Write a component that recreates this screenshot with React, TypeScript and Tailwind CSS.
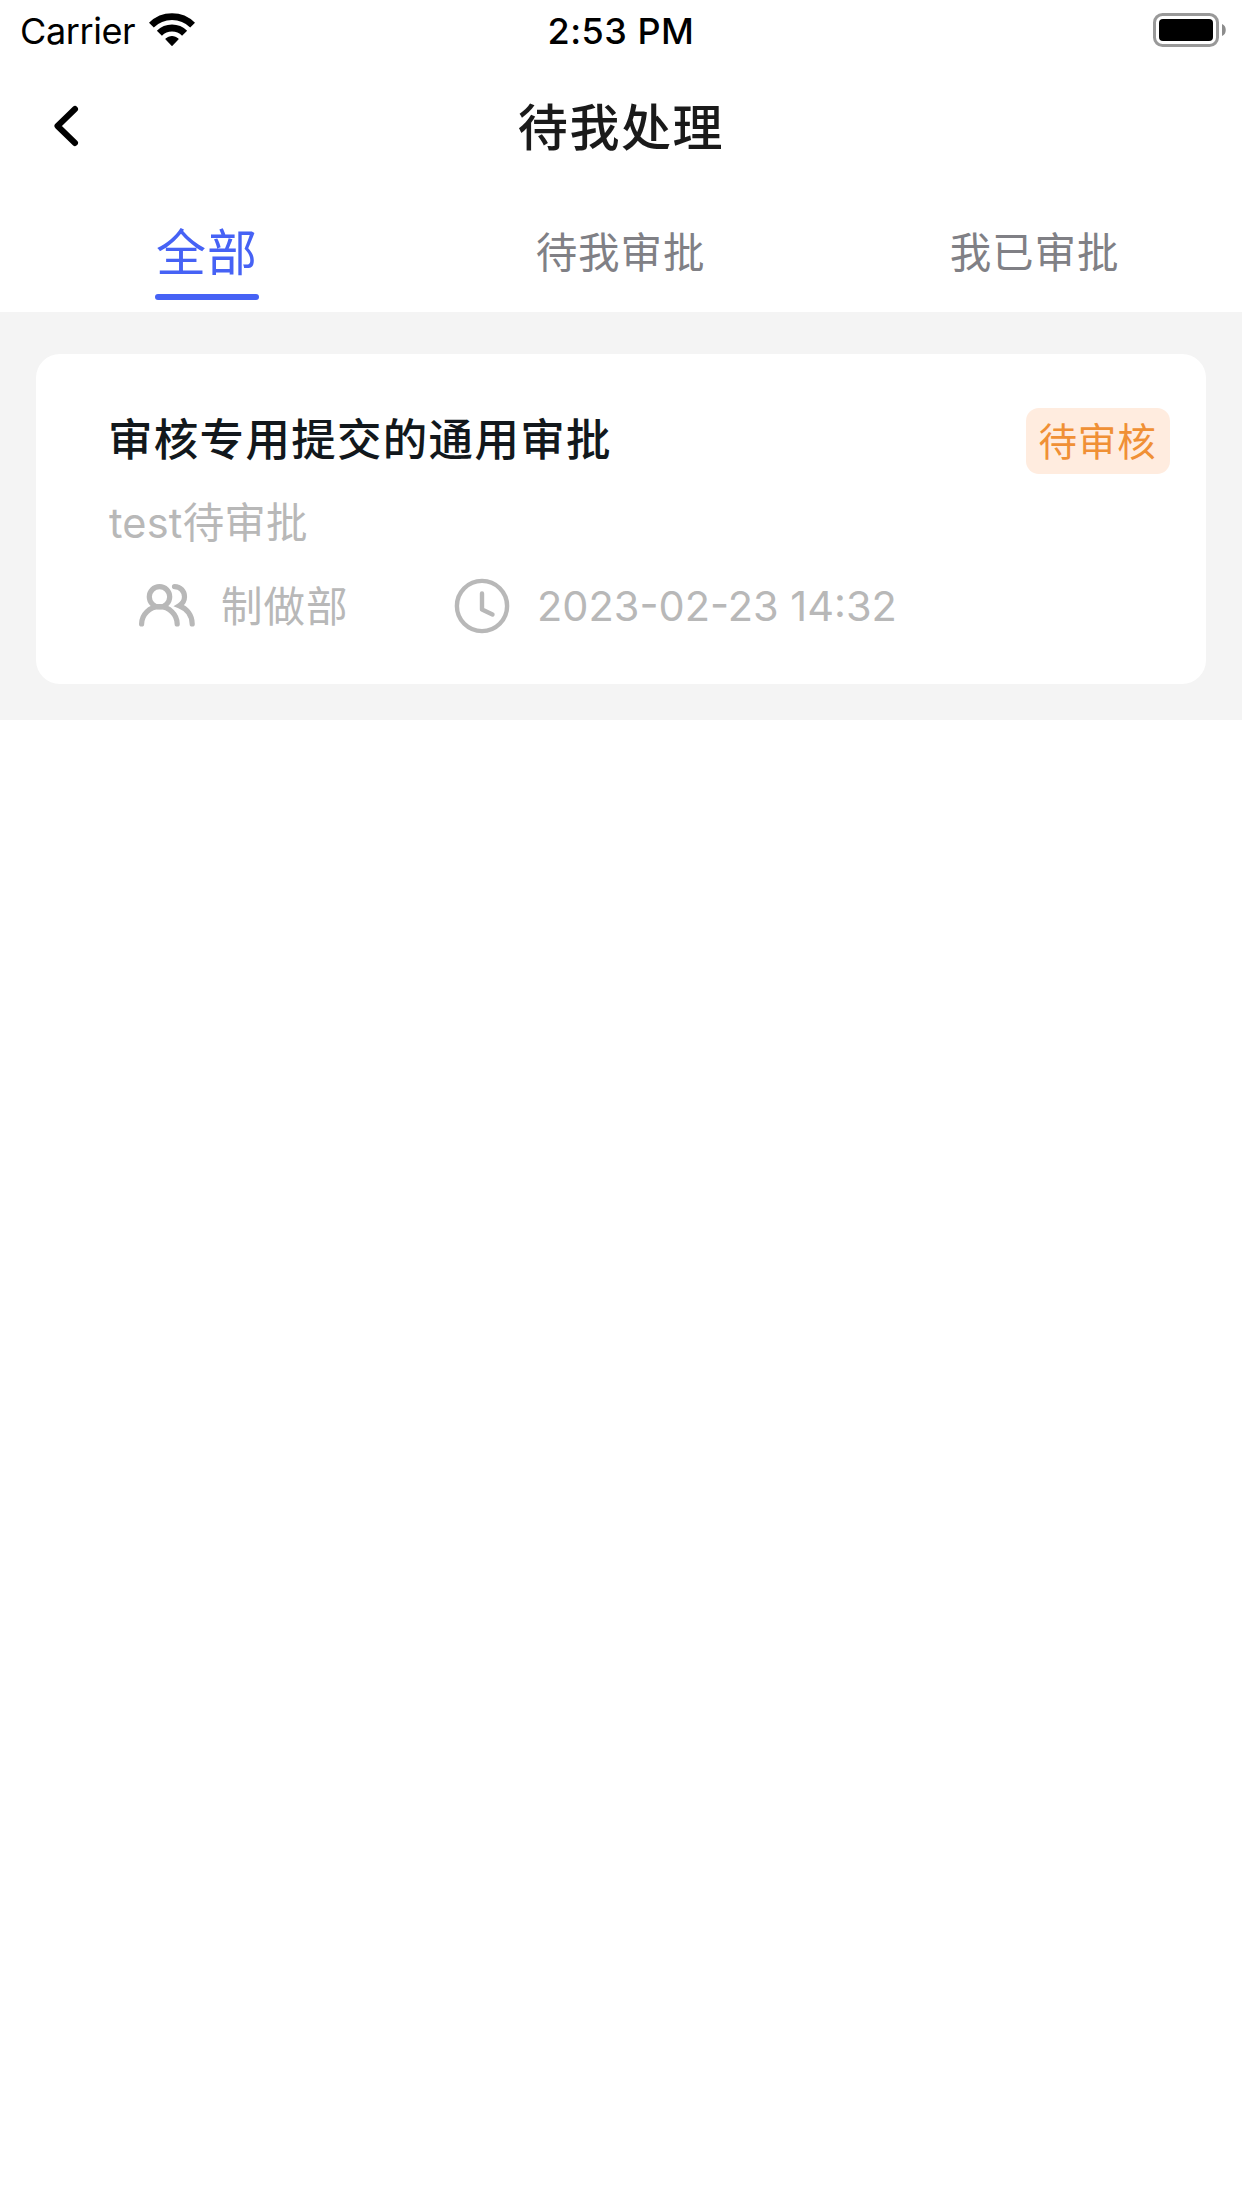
const tabs = ['全部', '待我审批', '我已审批']

interface Approval {
  title: string
  summary: string
  department: string
  time: string
  status: string
}

const approvals: Approval[] = [
  {
    title: '审核专用提交的通用审批',
    summary: 'test待审批',
    department: '制做部',
    time: '2023-02-23 14:32',
    status: '待审核',
  },
]

function WifiIcon() {
  return (
    <svg width="46" height="34" viewBox="0 0 46 34" fill="none" stroke="black">
      <path d="M2.4 12.2a29.2 29.2 0 0 1 41.2 0" strokeWidth="6.8" />
      <path d="M10.4 20.2a17.9 17.9 0 0 1 25.2 0" strokeWidth="7.2" />
      <path d="M23 32.3 17 26a8.6 8.6 0 0 1 12 0Z" fill="black" strokeWidth="1.2" strokeLinejoin="round" />
    </svg>
  )
}

function BatteryIcon() {
  return (
    <svg width="73" height="34" viewBox="0 0 73 34">
      <rect x="1.5" y="1.5" width="63" height="31" rx="8" fill="none" stroke="#999" strokeWidth="3" />
      <rect x="6" y="6" width="54" height="22" rx="4" fill="black" />
      <path d="M69 11c5 1.6 5 10.4 0 12Z" fill="#8c8c8c" />
    </svg>
  )
}

function PeopleIcon() {
  return (
    <svg width="56" height="44" viewBox="0 0 56 44" fill="none" stroke="currentColor" strokeWidth="5.2" strokeLinecap="round">
      <ellipse cx="20.5" cy="12.8" rx="10.2" ry="10.2" />
      <path d="M2.6 40a17.8 17.3 0 0 1 35.6 0" />
      <path d="M35.5 2.6c6 0 10 4.6 10 10.2 0 3.6-1.8 6.800-5.200 8.900 7.800 3 12.900 10 12.900 18.300" />
    </svg>
  )
}

function ClockIcon() {
  return (
    <svg width="56" height="56" viewBox="0 0 56 56" fill="none" stroke="currentColor" strokeWidth="4.4" strokeLinecap="round" strokeLinejoin="round">
      <circle cx="28" cy="28" r="25.1" />
      <path d="M28 15.5v16l10.500 5" />
    </svg>
  )
}

function StatusBar() {
  return (
    <div className="grid h-[60px] grid-cols-3 items-start pr-4 pl-5 text-[36px] leading-[60px] text-black">
      <div className="flex items-center gap-[14px] pt-px">
        <span className="tracking-[-0.4px]">Carrier</span>
        <div className="-mt-[3px]">
          <WifiIcon />
        </div>
      </div>
      <span className="pt-px pr-[4px] text-center font-medium tracking-[0.5px]">2:53 PM</span>
      <div className="flex justify-end pt-[13px]">
        <BatteryIcon />
      </div>
    </div>
  )
}

function Header() {
  return (
    <header className="grid h-[132px] grid-cols-[120px_1fr_120px] items-center">
      <button aria-label="返回" className="pl-[52px]">
        <svg width="28" height="44" viewBox="0 0 28 44" fill="none" stroke="black" strokeWidth="6" strokeLinecap="round" strokeLinejoin="round">
          <path d="M23 5 5.5 22 23 39" />
        </svg>
      </button>
      <h1 className="pt-[5px] text-center text-[50px] font-medium tracking-[1.6px] text-[#1a1a1a]">待我处理</h1>
    </header>
  )
}

function Tabs({ active }: { active: number }) {
  return (
    <nav className="grid h-[120px] grid-cols-3">
      {tabs.map((tab, i) => (
        <button key={tab} className="flex flex-col items-center">
          <span
            className={
              i === active
                ? 'h-[102px] text-[50px] leading-[122px] tracking-[1px] text-[#4662f5]'
                : 'h-[102px] pr-px text-[41.5px] leading-[122px] tracking-[0.9px] text-[#808085]'
            }
          >
            {tab}
          </span>
          {i === active && <span className="h-[6px] w-[104px] rounded-full bg-[#4662f5]" />}
        </button>
      ))}
    </nav>
  )
}

function ApprovalCard({ item }: { item: Approval }) {
  return (
    <article className="h-[330px] rounded-[24px] bg-white pt-[54px] pr-9 pl-[73px]">
      <div className="flex justify-between">
        <h2 className="-ml-px text-[44.5px] leading-[65px] font-medium tracking-[1.3px] text-[#12181c]">{item.title}</h2>
        <span className="flex h-[66px] w-[144px] items-center justify-center rounded-[13px] bg-[#ffecdf] pt-[3px] pr-px text-[38.5px] tracking-[0.8px] text-[#f09035]">
          {item.status}
        </span>
      </div>
      <p className="mt-[19px] text-[41.5px] leading-[60px] tracking-[0.2px] text-[#b8b8b8]">{item.summary}</p>
      <div className="mt-[22px] flex items-center text-[41.5px] leading-[60px] text-[#b8b8b8]">
        <div className="ml-[30px] flex w-[315px] items-center gap-[26px]">
          <PeopleIcon />
          <span className="pt-[2px] tracking-[1px]">{item.department}</span>
        </div>
        <div className="flex items-center gap-[27px]">
          <ClockIcon />
          <span>{item.time}</span>
        </div>
      </div>
    </article>
  )
}

export default function App() {
  return (
    <div className="h-[2208px] w-[1242px] overflow-hidden bg-white font-['Inter','Noto_Sans_CJK_SC',sans-serif]">
      <StatusBar />
      <Header />
      <Tabs active={0} />
      <main className="bg-[#f4f4f4] px-9 pt-[42px] pb-9">
        {approvals.map((item) => (
          <ApprovalCard key={item.title} item={item} />
        ))}
      </main>
    </div>
  )
}
